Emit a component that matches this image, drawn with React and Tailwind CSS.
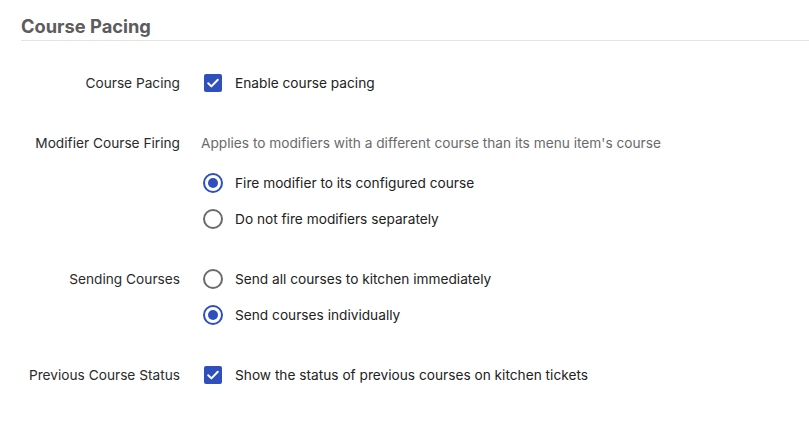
import { useState } from "react";

// Settings section: course pacing options
const Checkbox = ({ checked, onChange }) => (
  <button
    type="button"
    onClick={onChange}
    className={`ml-[3px] flex h-[18px] w-[18px] items-center justify-center rounded-[2px] ${
      checked ? "bg-[#2f4fbd]" : "border-2 border-[#6b6b6b] bg-white"
    }`}
  >
    {checked && (
      <svg width="14" height="14" viewBox="0 0 14 14" fill="none">
        <path d="M2.2 7.3l3.2 3.1 6.4-6.6" stroke="white" strokeWidth="2" strokeLinecap="round" strokeLinejoin="round" />
      </svg>
    )}
  </button>
);

const Radio = ({ checked, onChange }) => (
  <button
    type="button"
    onClick={onChange}
    className={`ml-[2px] flex h-[20px] w-[20px] items-center justify-center rounded-full border-2 ${
      checked ? "border-[#2f4fbd]" : "border-[#6b6b6b]"
    }`}
  >
    {checked && <span className="h-[10px] w-[10px] rounded-full bg-[#2f4fbd]" />}
  </button>
);

const Row = ({ label, children }) => (
  <div className="flex h-[36px] items-center pl-[20px]">
    <div className="w-[160px] text-right text-[#2b2b2b]">{label}</div>
    <div className="ml-[21px] flex items-center">{children}</div>
  </div>
);

export default function App() {
  const [pacing, setPacing] = useState(true);
  const [modifier, setModifier] = useState("configured");
  const [sending, setSending] = useState("individual");
  const [prevStatus, setPrevStatus] = useState(true);

  return (
    <div
      className="h-[425px] w-[809px] bg-white text-[13.7px]"
      style={{ fontFamily: "Inter, Roboto, 'Liberation Sans', sans-serif" }}
    >
      {/* Header */}
      <div className="ml-[21px] flex h-[41px] items-end border-b border-[#e3e3e3] pb-[3px]">
        <h2 className="text-[18.3px] font-bold leading-[22px] text-[#5c5c5c]">Course Pacing</h2>
      </div>

      <div className="mt-[24px] flex flex-col">
        <Row label="Course Pacing">
          <Checkbox checked={pacing} onChange={() => setPacing(!pacing)} />
          <span className="ml-[13px] text-[#222]">Enable course pacing</span>
        </Row>

        <div className="mt-[24px]">
          <Row label="Modifier Course Firing">
            <span className="text-[#6a6a6a]">
              Applies to modifiers with a different course than its menu item's course
            </span>
          </Row>
          <div className="mt-[4px]">
            <Row label="">
              <Radio checked={modifier === "configured"} onChange={() => setModifier("configured")} />
              <span className="ml-[12px] text-[#222]">Fire modifier to its configured course</span>
            </Row>
            <Row label="">
              <Radio checked={modifier === "none"} onChange={() => setModifier("none")} />
              <span className="ml-[12px] text-[#222]">Do not fire modifiers separately</span>
            </Row>
          </div>
        </div>

        <div className="mt-[24px]">
          <Row label="Sending Courses">
            <Radio checked={sending === "all"} onChange={() => setSending("all")} />
            <span className="ml-[12px] text-[#222]">Send all courses to kitchen immediately</span>
          </Row>
          <Row label="">
            <Radio checked={sending === "individual"} onChange={() => setSending("individual")} />
            <span className="ml-[12px] text-[#222]">Send courses individually</span>
          </Row>
        </div>

        <div className="mt-[24px]">
          <Row label="Previous Course Status">
            <Checkbox checked={prevStatus} onChange={() => setPrevStatus(!prevStatus)} />
            <span className="ml-[13px] text-[#222]">Show the status of previous courses on kitchen tickets</span>
          </Row>
        </div>
      </div>
    </div>
  );
}
